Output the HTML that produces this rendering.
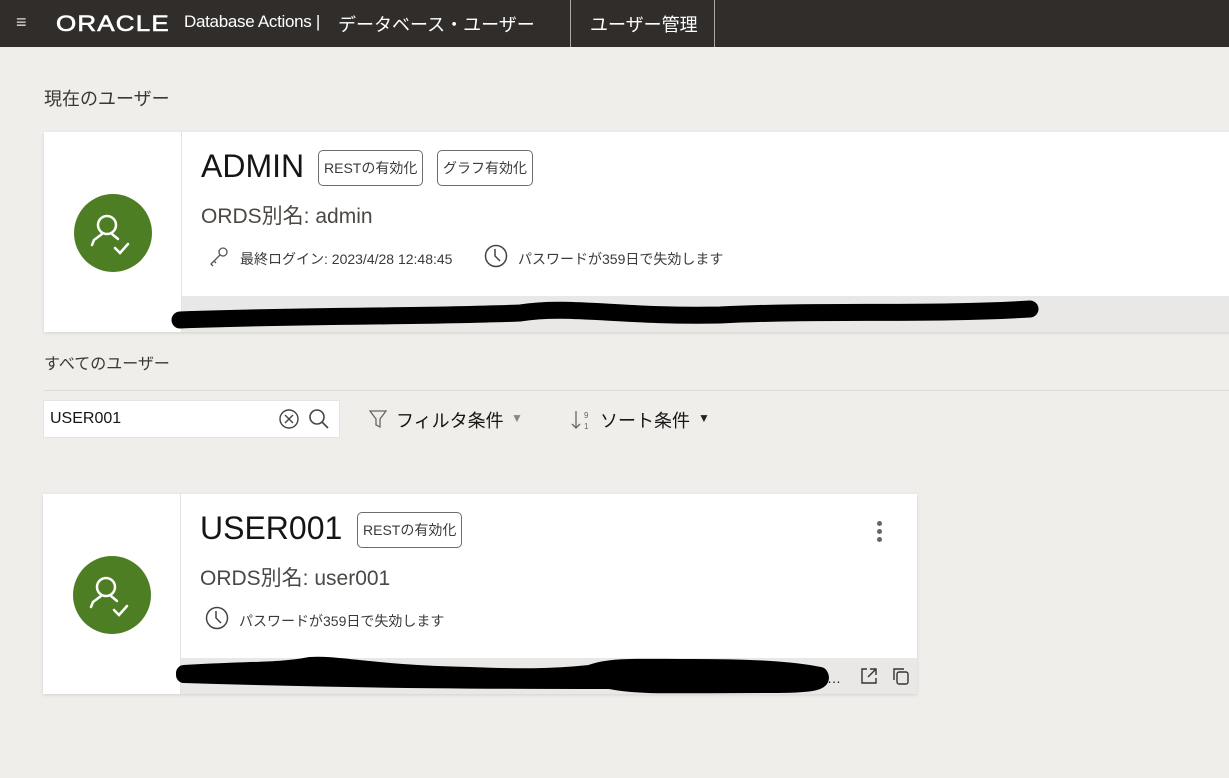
<!DOCTYPE html>
<html><head><meta charset="utf-8"><style>
*{margin:0;padding:0;box-sizing:border-box}
body{width:1229px;height:778px;background:#f0eeeb;font-family:"Liberation Sans","Noto Sans CJK JP",sans-serif;position:relative;overflow:hidden;color:#161513}
.hdr{position:absolute;left:0;top:0;width:1229px;height:47px;background:#312d2a;color:#fff}
.abs{position:absolute}
.card{position:absolute;background:#fff;box-shadow:0 1px 3px rgba(0,0,0,.12)}
.side{position:absolute;left:0;top:0;width:138px;height:100%;border-right:1px solid #e4e2df}
.av{position:absolute;width:78px;height:78px;border-radius:50%;background:#4e7e24}
.strip{position:absolute;background:#e9e8e6}
.badge{position:absolute;border:1px solid #6f6c69;border-radius:5px;font-size:14px;color:#3d3a38;height:36px;line-height:34px;padding:0 5px}
.t{position:absolute;white-space:nowrap}
</style></head><body>
<div class="hdr">
 <div class="t" style="left:16px;top:12px;font-size:18px;color:#ddd">≡</div>
 <div class="t" style="left:56px;top:11px;font-size:22px;letter-spacing:1px;transform:scaleX(1.18);transform-origin:left;-webkit-text-stroke:0.6px #fff">ORACLE</div>
 <div class="t" style="left:184px;top:12px;font-size:17px;letter-spacing:-0.3px">Database Actions |</div>
 <div class="t" style="left:338px;top:11px;font-size:18px">データベース・ユーザー</div>
 <div class="abs" style="left:570px;top:0;width:1px;height:47px;background:#aaa"></div>
 <div class="t" style="left:590px;top:11px;font-size:18px">ユーザー管理</div>
 <div class="abs" style="left:714px;top:0;width:1px;height:47px;background:#aaa"></div>
</div>
<div class="t" style="left:44px;top:85px;font-size:18px;color:#3a3735">現在のユーザー</div>

<div class="card" style="left:44px;top:132px;width:1190px;height:200px">
 <div class="side"></div>
 <div class="av" style="left:30px;top:62px"><svg width="78" height="78" viewBox="0 0 78 78" fill="none" stroke="#fff" stroke-width="2.5" stroke-linecap="round"><circle cx="33" cy="31" r="9"/><path d="M28 40 L20 46 L18 51 M38 40 L44 45"/><path d="M41 54 L46 59 L54 50"/></svg></div>
 <div class="strip" style="left:138px;top:164px;width:1052px;height:36px"></div>
 <div class="t" style="left:157px;top:16px;font-size:32px">ADMIN</div>
 <div class="badge" style="left:274px;top:18px">RESTの有効化</div>
 <div class="badge" style="left:393px;top:18px">グラフ有効化</div>
 <div class="t" style="left:157px;top:68px;font-size:21px;color:#4a4744">ORDS別名: admin</div>
 <svg class="abs" style="left:164px;top:114px" width="22" height="22" viewBox="0 0 22 22" fill="none" stroke="#555" stroke-width="1.3"><circle cx="15" cy="6" r="4"/><path d="M12 9 L3 18 L5 20 M6 15 L8 17"/></svg>
 <div class="t" style="left:196px;top:117px;font-size:14px;color:#3d3a38">最終ログイン: 2023/4/28 12:48:45</div>
 <svg class="abs" style="left:440px;top:112px" width="24" height="24" viewBox="0 0 24 24" fill="none" stroke="#444" stroke-width="1.5"><circle cx="12" cy="12" r="10.5"/><path d="M11 5 V12 L16 17"/></svg>
 <div class="t" style="left:474px;top:117px;font-size:14px;color:#3d3a38">パスワードが359日で失効します</div>
</div>
<svg class="abs" style="left:170px;top:295px" width="880" height="40"><path d="M10 25 C150 20 250 22 350 18 C400 10 450 22 550 20 C650 15 760 20 860 14" stroke="#000" stroke-width="17" stroke-linecap="round" fill="none"/></svg>

<div class="t" style="left:44px;top:350px;font-size:16px;color:#3a3735">すべてのユーザー</div>
<div class="abs" style="left:44px;top:390px;width:1185px;height:1px;background:#dedcd9"></div>
<div class="abs" style="left:43px;top:400px;width:297px;height:38px;background:#fff;border:1px solid #e6e4e1"></div>
<div class="t" style="left:50px;top:410px;font-size:16px">USER001</div>
<svg class="abs" style="left:278px;top:408px" width="22" height="22" viewBox="0 0 22 22" fill="none" stroke="#444" stroke-width="1.4"><circle cx="11" cy="11" r="9"/><path d="M7 7 L15 15 M15 7 L7 15"/></svg>
<svg class="abs" style="left:307px;top:407px" width="24" height="24" viewBox="0 0 24 24" fill="none" stroke="#444" stroke-width="1.6"><circle cx="10" cy="10" r="7"/><path d="M15 15 L21 21"/></svg>
<svg class="abs" style="left:369px;top:409px" width="18" height="20" viewBox="0 0 18 20" fill="none" stroke="#666" stroke-width="1.3"><path d="M1 2 H17 L11 10 V18 L7 16 V10 Z"/></svg>
<div class="t" style="left:396px;top:407px;font-size:18px">フィルタ条件</div>
<div class="t" style="left:511px;top:411px;font-size:12px;color:#888">▼</div>
<svg class="abs" style="left:570px;top:409px" width="24" height="22" viewBox="0 0 24 22" fill="none" stroke="#666" stroke-width="1.3"><path d="M6 2 V19 M2 15 L6 19 L10 15"/><text x="14" y="9" font-size="8" fill="#666" stroke="none">9</text><text x="14" y="20" font-size="8" fill="#666" stroke="none">1</text></svg>
<div class="t" style="left:600px;top:407px;font-size:18px">ソート条件</div>
<div class="t" style="left:698px;top:411px;font-size:12px;color:#222">▼</div>

<div class="card" style="left:43px;top:494px;width:874px;height:200px">
 <div class="side"></div>
 <div class="av" style="left:30px;top:62px"><svg width="78" height="78" viewBox="0 0 78 78" fill="none" stroke="#fff" stroke-width="2.5" stroke-linecap="round"><circle cx="33" cy="31" r="9"/><path d="M28 40 L20 46 L18 51 M38 40 L44 45"/><path d="M41 54 L46 59 L54 50"/></svg></div>
 <div class="strip" style="left:138px;top:164px;width:736px;height:36px"></div>
 <div class="t" style="left:157px;top:16px;font-size:32px">USER001</div>
 <div class="badge" style="left:314px;top:18px">RESTの有効化</div>
 <div class="abs" style="left:834px;top:27px;width:5px;height:5px;border-radius:50%;background:#666;box-shadow:0 8px 0 #666,0 16px 0 #666"></div>
 <div class="t" style="left:157px;top:68px;font-size:21px;color:#4a4744">ORDS別名: user001</div>
 <svg class="abs" style="left:162px;top:112px" width="24" height="24" viewBox="0 0 24 24" fill="none" stroke="#444" stroke-width="1.5"><circle cx="12" cy="12" r="10.5"/><path d="M11 5 V12 L16 17"/></svg>
 <div class="t" style="left:196px;top:117px;font-size:14px;color:#3d3a38">パスワードが359日で失効します</div>
 <div class="t" style="left:784px;top:176px;font-size:14px">…</div>
 <svg class="abs" style="left:816px;top:172px" width="20" height="20" viewBox="0 0 20 20" fill="none" stroke="#333" stroke-width="1.4"><path d="M8 3 H3 V17 H17 V12 M11 3 H17 V9 M17 3 L9 11"/></svg>
 <svg class="abs" style="left:848px;top:172px" width="20" height="20" viewBox="0 0 20 20" fill="none" stroke="#333" stroke-width="1.4"><rect x="6" y="6" width="11" height="12" rx="2"/><path d="M3 14 V3 H13"/></svg>
</div>
<svg class="abs" style="left:170px;top:655px" width="670" height="45"><path d="M14 18 C80 14 110 16 140 10 C170 8 200 18 300 20 C350 22 380 22 420 18 C440 10 470 12 520 12 C580 12 620 14 650 20 C655 28 640 30 600 30 C500 30 470 32 440 26 C350 26 200 26 14 20" stroke="#000" stroke-width="16" stroke-linecap="round" stroke-linejoin="round" fill="#000"/></svg>
</body></html>
